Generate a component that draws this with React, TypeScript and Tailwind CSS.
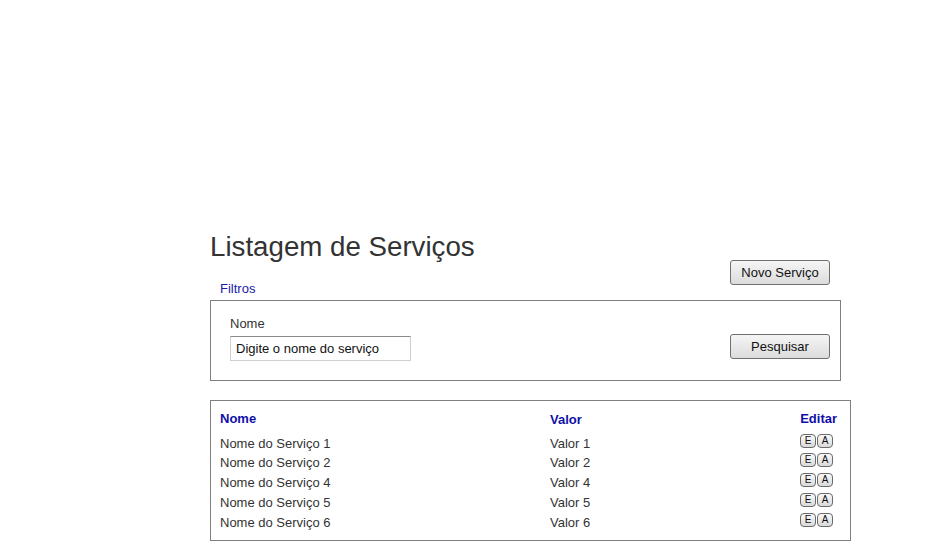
import React from "react";

const rows = [
  { nome: "Nome do Serviço 1", valor: "Valor 1" },
  { nome: "Nome do Serviço 2", valor: "Valor 2" },
  { nome: "Nome do Serviço 4", valor: "Valor 4" },
  { nome: "Nome do Serviço 5", valor: "Valor 5" },
  { nome: "Nome do Serviço 6", valor: "Valor 6" },
];

function Btn({ children }: { children: React.ReactNode }) {
  return (
    <button className="w-[100px] h-[25px] border border-[#707070] rounded-[3px] bg-gradient-to-b from-[#f5f5f5] to-[#dcdcdc] text-[13px] leading-[15px] text-[#111] flex items-center justify-center">
      {children}
    </button>
  );
}

function Mini({ children }: { children: React.ReactNode }) {
  return (
    <span className="w-[16px] h-[14px] border border-[#6a6a6a] rounded-[4px] bg-gradient-to-b from-[#fafafa] to-[#dadada] text-[10px] leading-none text-[#111] flex items-center justify-center">
      {children}
    </span>
  );
}

export default function App() {
  return (
    <div
      className="w-full h-[548px] bg-white text-[#333] pt-[233px] pl-[210px]"
      style={{ fontFamily: '"Liberation Sans", Arial, sans-serif' }}
    >
      <div className="w-[641px]">
        <h1 className="text-[27.7px] leading-[28px] h-[27px] font-normal text-[#333]">
          Listagem de Serviços
        </h1>
        <div className="w-[631px] h-[40px] flex justify-between">
          <div className="self-end pl-[10px] pb-[4px] text-[13px] leading-[15px] text-[#1a1aa6]">
            Filtros
          </div>
          <div className="mr-[11px]">
            <Btn>Novo Serviço</Btn>
          </div>
        </div>
        <div className="w-[631px] h-[81px] border border-[#808080] flex justify-between pl-[19px] pr-[10px]">
          <div className="pt-[15px]">
            <div className="text-[13px] leading-[15px] text-[#333]">Nome</div>
            <div className="mt-[5px] w-[181px] h-[25px] border border-[#cfcfcf] border-t-[#8a8a8a] flex items-center pl-[5px] text-[13px] text-[#111]">
              Digite o nome do serviço
            </div>
          </div>
          <div className="pt-[33px]">
            <Btn>Pesquisar</Btn>
          </div>
        </div>
        <div className="mt-[19px] w-[641px] h-[141px] border border-[#808080] pl-[9px] pr-[13px] pt-[8px]">
          <div className="grid grid-cols-[330px_1fr_auto] text-[13px]">
            <div className="leading-[20px] font-bold text-[#1010a8] h-[25px]">Nome</div>
            <div className="leading-[20px] font-bold text-[#1010a8] pt-[1px] h-[25px]">Valor</div>
            <div className="leading-[20px] font-bold text-[#1010a8] h-[25px] text-right">Editar</div>
            {rows.map((r, i) => (
              <React.Fragment key={r.nome}>
                <div className={i === 0 ? "leading-[20px] h-[19px]" : "leading-[20px] h-[20px]"}>{r.nome}</div>
                <div className={i === 0 ? "leading-[20px] h-[19px]" : "leading-[20px] h-[20px]"}>{r.valor}</div>
                <div className={i === 0 ? "h-[19px] flex justify-end pr-[4px] gap-[1px]" : "h-[20px] flex justify-end pr-[4px] gap-[1px]"}>
                  <Mini>E</Mini>
                  <Mini>A</Mini>
                </div>
              </React.Fragment>
            ))}
          </div>
        </div>
      </div>
    </div>
  );
}
